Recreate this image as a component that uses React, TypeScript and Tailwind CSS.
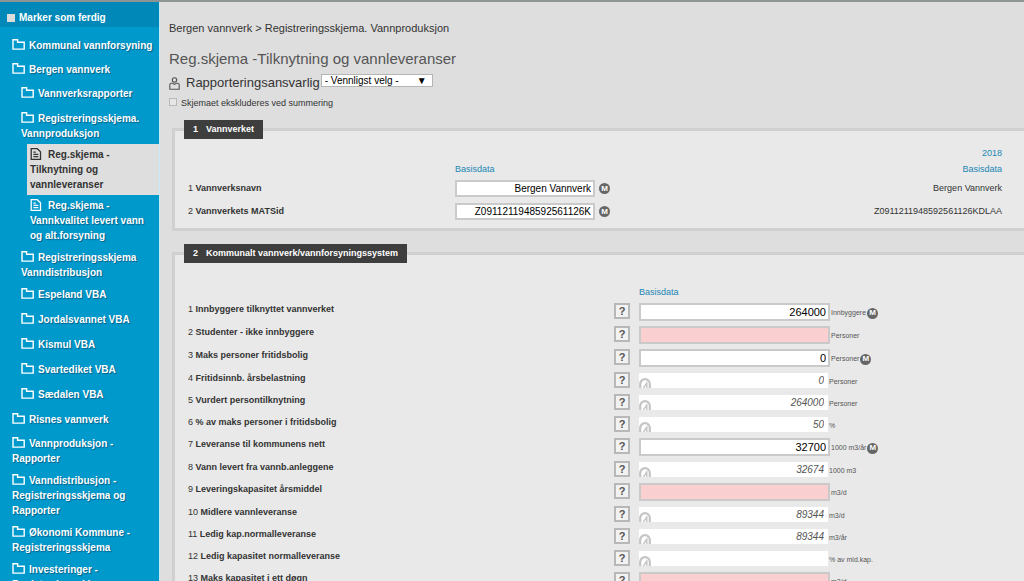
import React, { useState } from 'react';

type Item = {
  label: string;
  depth: 0 | 1 | 2;
  active?: boolean;
};

const menu: Item[] = [
  { label: 'Kommunal vannforsyning', depth: 0 },
  { label: 'Bergen vannverk', depth: 0 },
  { label: 'Vannverksrapporter', depth: 1 },
  { label: 'Registreringsskjema.\nVannproduksjon', depth: 1 },
  { label: 'Reg.skjema -\nTilknytning og\nvannleveranser', depth: 2, active: true },
  { label: 'Reg.skjema -\nVannkvalitet levert vann\nog alt.forsyning', depth: 2 },
  { label: 'Registreringsskjema\nVanndistribusjon', depth: 1 },
  { label: 'Espeland VBA', depth: 1 },
  { label: 'Jordalsvannet VBA', depth: 1 },
  { label: 'Kismul VBA', depth: 1 },
  { label: 'Svartediket VBA', depth: 1 },
  { label: 'Sædalen VBA', depth: 1 },
  { label: 'Risnes vannverk', depth: 0 },
  { label: 'Vannproduksjon -\nRapporter', depth: 0 },
  { label: 'Vanndistribusjon -\nRegistreringsskjema og\nRapporter', depth: 0 },
  { label: 'Økonomi Kommune -\nRegistreringsskjema', depth: 0 },
  { label: 'Investeringer -\nRegistreringsskjema', depth: 0 },
];

const depthClass = {
  0: 'ml-3 pt-1 pb-[3px] min-h-6',
  1: 'ml-[21px] pt-1 pb-[3px] min-h-[25px]',
  2: 'ml-[27px] pl-[3px] py-[3px]',
};

type Row = {
  name: string;
  value: string;
  unit: string;
  kind: 'input' | 'missing' | 'calc';
  marked?: boolean;
};

const rows: Row[] = [
  { name: 'Innbyggere tilknyttet vannverket', value: '264000', unit: 'Innbyggere', kind: 'input', marked: true },
  { name: 'Studenter - ikke innbyggere', value: '', unit: 'Personer', kind: 'missing' },
  { name: 'Maks personer fritidsbolig', value: '0', unit: 'Personer', kind: 'input', marked: true },
  { name: 'Fritidsinnb. årsbelastning', value: '0', unit: 'Personer', kind: 'calc' },
  { name: 'Vurdert persontilknytning', value: '264000', unit: 'Personer', kind: 'calc' },
  { name: '% av maks personer i fritidsbolig', value: '50', unit: '%', kind: 'calc' },
  { name: 'Leveranse til kommunens nett', value: '32700', unit: '1000 m3/år', kind: 'input', marked: true },
  { name: 'Vann levert fra vannb.anleggene', value: '32674', unit: '1000 m3', kind: 'calc' },
  { name: 'Leveringskapasitet årsmiddel', value: '', unit: 'm3/d', kind: 'missing' },
  { name: 'Midlere vannleveranse', value: '89344', unit: 'm3/d', kind: 'calc' },
  { name: 'Ledig kap.normalleveranse', value: '89344', unit: 'm3/år', kind: 'calc' },
  { name: 'Ledig kapasitet normalleveranse', value: '', unit: '% av mid.kap.', kind: 'calc' },
  { name: 'Maks kapasitet i ett døgn', value: '', unit: 'm3/d', kind: 'missing' },
];

const FolderIcon = () => (
  <svg viewBox="0 0 13 11" className="mr-1 inline-block h-[11px] w-[13px] align-[-1px]" fill="none" stroke="currentColor" strokeWidth="1.4">
    <path d="M1 .8h4.6v2.4h6.6v6.9H1z" />
  </svg>
);

const FileIcon = () => (
  <svg viewBox="0 0 12 12" className="mr-[6px] inline-block size-3 align-[-2px]" fill="none" stroke="currentColor" strokeWidth="1.3">
    <path d="M1.2.7h6l3.3 3.1v7.5H1.2zM3.4 4.2h2.4M3.4 6.4h4.9M3.4 8.7h4.9" />
  </svg>
);

const PersonIcon = () => (
  <svg viewBox="0 0 11 13" className="h-[13px] w-[11px]" fill="none" stroke="#555" strokeWidth="1.1">
    <circle cx="5.5" cy="2.9" r="2.2" />
    <path d="M3.6 6.2H2.4C1.3 6.2.8 7 .8 8v4.2h9.4V8c0-1-.5-1.8-1.6-1.8H7.4L5.5 7.4z" />
  </svg>
);

const CalcIcon = () => (
  <svg viewBox="0 0 12 11" className="pointer-events-none absolute bottom-0 left-0 h-[11px] w-3" fill="none" stroke="#c4c4c4">
    <path d="M1.2 11V7a4.8 4.8 0 0 1 9.6 0v4" strokeWidth="2.2" />
    <path d="M4.4 11l3.4-5v5" strokeWidth="1.4" />
  </svg>
);

const Marker = () => (
  <span className="flex size-[11px] shrink-0 items-center justify-center rounded-full bg-[#666] text-[8px] leading-none font-bold text-white">
    M
  </span>
);

const Section = ({ no, title, children }: { no: number; title: string; children: React.ReactNode }) => (
  <section className="border-[3px] border-r-0 border-[#d0d0d0] bg-[#e9e9e9] pl-[13px]">
    <h2 className="-mt-[11px] -ml-1 flex h-[19px] w-fit items-center gap-2 bg-[#3e3e3e] px-[9px] text-[9px] font-bold text-white">
      <span>{no}</span>
      {title}
    </h2>
    {children}
  </section>
);

const Sidebar = () => (
  <nav className="w-[159px] shrink-0 bg-[#0099cc] text-[10px] leading-[15px] font-bold text-white">
    <label className="mb-[7px] flex h-[25px] items-center gap-1 bg-[#0088b8] pt-[6px] pl-[7px]">
      <input type="checkbox" className="size-2 appearance-none bg-[#dcdcdc]" />
      Marker som ferdig
    </label>
    {menu.map((item) => (
      <a
        key={item.label}
        href="#"
        className={`block whitespace-pre-line ${depthClass[item.depth]} ${
          item.active ? 'bg-[#dedede] text-[#333]' : '[text-shadow:1px_1px_1px_#00608a]'
        }`}
      >
        {item.depth === 2 ? <FileIcon /> : <FolderIcon />}
        {item.label}
      </a>
    ))}
  </nav>
);

const ValueField = ({ row, id }: { row: Row; id: string }) => {
  const [value, setValue] = useState(row.value);

  if (row.kind === 'calc') {
    return (
      <div className="relative mt-[2px] h-[15px]">
        <input
          id={id}
          readOnly
          value={value}
          className="block h-full w-[189px] bg-white pr-1 text-right text-[10px] text-[#555] italic"
        />
        <CalcIcon />
      </div>
    );
  }

  return (
    <input
      id={id}
      value={value}
      onChange={(e) => setValue(e.target.value)}
      className={`mt-px block h-[18px] w-[191px] border-2 border-[#cacaca] pr-[2px] text-right text-[11px] text-black ${
        row.kind === 'missing' ? 'bg-[#f9cfd0]' : 'bg-white'
      }`}
    />
  );
};

const App = () => {
  const [name, setName] = useState('Bergen Vannverk');
  const [matsId, setMatsId] = useState('Z0911211948592561126K');

  return (
    <div className="flex h-screen overflow-hidden border-t-2 border-[#8c9494] bg-[#dedede] font-['Liberation_Sans',Arial,sans-serif] text-[#333]">
      <Sidebar />

      <main className="min-w-0 flex-1 border-l border-[#c5eaf8] pl-[9px]">
        <p className="mt-[18px] text-[11px] leading-4">Bergen vannverk &gt; Registreringsskjema. Vannproduksjon</p>
        <h1 className="mt-[13px] text-[15px] leading-5 text-[#555]">Reg.skjema -Tilknytning og vannleveranser</h1>

        <div className="mt-1 flex h-5 items-center">
          <PersonIcon />
          <label htmlFor="ansvarlig" className="ml-[6px] text-[13px]">Rapporteringsansvarlig</label>
          <div className="relative mb-[6px] ml-px">
            <select
              id="ansvarlig"
              className="block h-[13px] w-28 appearance-none border border-[#b5b5b5] bg-white pl-[3px] text-[10px] leading-[11px] text-black"
            >
              <option>- Vennligst velg -</option>
            </select>
            <span className="pointer-events-none absolute top-0 right-[6px] text-[10px] leading-[13px] text-black">▼</span>
          </div>
        </div>

        <label className="mt-[5px] flex h-3 items-center gap-1 text-[9px]">
          <input type="checkbox" className="mb-1 size-2 appearance-none border border-[#b8b8b8] bg-[#e6e6e6]" />
          Skjemaet ekskluderes ved summering
        </label>

        <div className="mt-[18px] ml-[3px] flex flex-col gap-[21px]">
          <Section no={1} title="Vannverket">
            <div className="mt-[6px] grid grid-cols-[267px_140px_1fr] pr-[22px] pb-[5px] text-[9px]">
              <span className="col-start-3 h-4 text-right leading-4 text-[#2187b5]">2018</span>
              <span className="col-start-2 h-4 leading-4 text-[#2187b5]">Basisdata</span>
              <span className="h-4 text-right leading-4 text-[#2187b5]">Basisdata</span>

              <label htmlFor="navn" className="leading-[23px]">
                1 <b>Vannverksnavn</b>
              </label>
              <input
                id="navn"
                value={name}
                onChange={(e) => setName(e.target.value)}
                className="h-[17px] self-center border-2 border-[#cacaca] bg-white px-[2px] text-right text-[10px] text-black"
              />
              <div className="flex items-center justify-between pl-1">
                <Marker />
                <span>Bergen Vannverk</span>
              </div>

              <label htmlFor="matsid" className="leading-[23px]">
                2 <b>Vannverkets MATSid</b>
              </label>
              <input
                id="matsid"
                value={matsId}
                onChange={(e) => setMatsId(e.target.value)}
                className="h-[17px] self-center border-2 border-[#cacaca] bg-white px-[2px] text-right text-[10px] text-black"
              />
              <div className="flex items-center justify-between pl-1">
                <Marker />
                <span>Z0911211948592561126KDLAA</span>
              </div>
            </div>
          </Section>

          <Section no={2} title="Kommunalt vannverk/vannforsyningssystem">
            <div className="mt-[21px] pb-3 text-[9px]">
              <p className="ml-[451px] h-[18px] leading-4 text-[#2187b5]">Basisdata</p>
              {rows.map((row, i) => (
                <div key={row.name} className={`flex items-start ${row.kind === 'calc' ? 'h-[22px]' : 'h-[23px]'}`}>
                  <label htmlFor={`felt-${i}`} className="w-[426px] leading-[15px]">
                    {i + 1} <b>{row.name}</b>
                  </label>
                  <button
                    type="button"
                    aria-label={`Hjelp: ${row.name}`}
                    className="mt-px mr-[9px] size-4 shrink-0 border-2 border-[#b8b8b8] bg-[#f2f2f2] text-[11px] leading-3 font-bold text-[#555]"
                  >
                    ?
                  </button>
                  <ValueField row={row} id={`felt-${i}`} />
                  <span className="mt-[3px] flex h-4 items-center gap-px pl-px text-[7px] text-[#555]">
                    {row.unit}
                    {row.marked && <Marker />}
                  </span>
                </div>
              ))}
            </div>
          </Section>
        </div>
      </main>
    </div>
  );
};

export default App;
